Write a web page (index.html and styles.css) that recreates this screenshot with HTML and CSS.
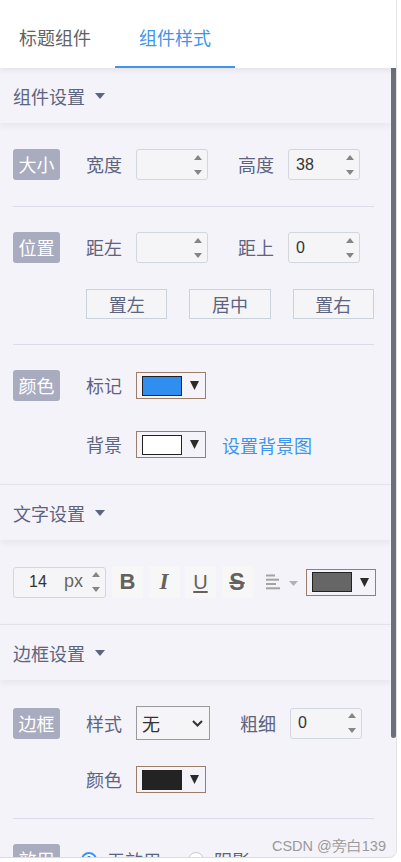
FILE: index.html
```html
<!DOCTYPE html>
<html lang="zh">
<head>
<meta charset="utf-8">
<title>组件样式</title>
<link rel="stylesheet" href="styles.css">
</head>
<body>
<div class="panel">
  <div class="tabs">
    <div class="tab tab-first">标题组件</div>
    <div class="tab tab-active">组件样式</div>
  </div>
  <div class="main">
    <div class="content">
      <div class="sec-head sec-head-first">组件设置<span class="caret"></span></div>
      <div class="sec-body">
        <div class="row">
          <span class="tag">大小</span>
          <span class="label">宽度</span>
          <div class="num"><span class="val"></span><span class="spin"><i class="up"></i><i class="down"></i></span></div>
          <span class="label label-gap">高度</span>
          <div class="num"><span class="val">38</span><span class="spin"><i class="up"></i><i class="down"></i></span></div>
        </div>
        <div class="divider"></div>
        <div class="row">
          <span class="tag">位置</span>
          <span class="label">距左</span>
          <div class="num"><span class="val"></span><span class="spin"><i class="up"></i><i class="down"></i></span></div>
          <span class="label label-gap">距上</span>
          <div class="num"><span class="val">0</span><span class="spin"><i class="up"></i><i class="down"></i></span></div>
        </div>
        <div class="row row-indent row-btns">
          <div class="btn">置左</div>
          <div class="btn">居中</div>
          <div class="btn">置右</div>
        </div>
        <div class="divider divider-tight"></div>
        <div class="row">
          <span class="tag">颜色</span>
          <span class="label">标记</span>
          <div class="picker"><span class="swatch swatch-blue"></span><svg class="arrow" width="9" height="9" viewBox="0 0 9 9"><polygon points="0,0 9,0 4.5,9" fill="#2b2b2b"/></svg></div>
        </div>
        <div class="row row-indent row-second">
          <span class="label">背景</span>
          <div class="picker"><span class="swatch swatch-white"></span><svg class="arrow" width="9" height="9" viewBox="0 0 9 9"><polygon points="0,0 9,0 4.5,9" fill="#2b2b2b"/></svg></div>
          <span class="link">设置背景图</span>
        </div>
      </div>

      <div class="sec-head">文字设置<span class="caret"></span></div>
      <div class="sec-body">
        <div class="row">
          <div class="num num-size"><span class="val val-size">14</span><span class="unit">px</span><span class="spin"><i class="up"></i><i class="down"></i></span></div>
          <div class="fmt fmt-b">B</div>
          <div class="fmt fmt-i">I</div>
          <div class="fmt fmt-u">U</div>
          <div class="fmt fmt-s">S</div>
          <div class="align">
            <svg width="15" height="16" viewBox="0 0 15 16"><g fill="#a3a3a3"><rect x="0" y="0.5" width="9" height="2"/><rect x="0" y="4.7" width="13" height="2"/><rect x="0" y="9" width="10" height="2"/><rect x="0" y="13.3" width="14" height="2"/></g></svg>
            <svg class="align-caret" width="9" height="5" viewBox="0 0 9 5"><polygon points="0,0 9,0 4.5,5" fill="#b2b2b2"/></svg>
          </div>
          <div class="picker"><span class="swatch swatch-gray"></span><svg class="arrow" width="9" height="9" viewBox="0 0 9 9"><polygon points="0,0 9,0 4.5,9" fill="#2b2b2b"/></svg></div>
        </div>
      </div>

      <div class="sec-head">边框设置<span class="caret"></span></div>
      <div class="sec-body">
        <div class="row">
          <span class="tag">边框</span>
          <span class="label">样式</span>
          <div class="select"><span class="select-val">无</span><svg width="11" height="7" viewBox="0 0 11 7"><polyline points="1,1 5.5,5.5 10,1" fill="none" stroke="#333" stroke-width="2"/></svg></div>
          <span class="label label-gap">粗细</span>
          <div class="num"><span class="val">0</span><span class="spin"><i class="up"></i><i class="down"></i></span></div>
        </div>
        <div class="row row-indent row-second-b">
          <span class="label">颜色</span>
          <div class="picker"><span class="swatch swatch-black"></span><svg class="arrow" width="9" height="9" viewBox="0 0 9 9"><polygon points="0,0 9,0 4.5,9" fill="#2b2b2b"/></svg></div>
        </div>
        <div class="divider divider-tight"></div>
        <div class="row">
          <span class="tag">效用</span>
          <span class="radio radio-on"></span><span class="radio-text">无效用</span>
          <span class="radio"></span><span class="radio-text">阴影</span>
        </div>
      </div>
    </div>
    <div class="scrollbar"><div class="thumb"></div></div>
  </div>
  <div class="watermark">CSDN @旁白139</div>
</div>
</body>
</html>
```

FILE: styles.css
```css
html, body {
  margin: 0;
  padding: 0;
  background: #ffffff;
}
body {
  font-family: "Noto Sans CJK SC", "Liberation Sans", sans-serif;
}
.panel {
  width: 396px;
  height: 857px;
  border-right: 1px solid #e3e3e7;
  border-bottom: 1px solid #dcdce0;
  border-bottom-right-radius: 8px;
  overflow: hidden;
  display: flex;
  flex-direction: column;
  position: relative;
  background: #f4f3f9;
}
.tabs {
  height: 68px;
  flex: none;
  display: flex;
  background: #ffffff;
  box-shadow: 0 2px 6px rgba(0, 0, 0, 0.08);
  position: relative;
  z-index: 2;
}
.tab {
  height: 68px;
  box-sizing: border-box;
  padding-top: 24px;
  line-height: 26px;
  font-size: 18px;
  color: #636363;
}
.tab-first {
  width: 115px;
  padding-left: 19px;
}
.tab-active {
  width: 120px;
  text-align: center;
  color: #3f95ea;
  border-bottom: 2px solid #4193e8;
}
.main {
  flex: 1;
  display: flex;
  min-height: 0;
}
.content {
  flex: 1;
  min-width: 0;
  overflow: hidden;
}
.scrollbar {
  width: 5px;
  flex: none;
}
.thumb {
  height: 670px;
  background: #6b7079;
  border-radius: 0 0 3px 3px;
}
.sec-head {
  height: 56px;
  box-sizing: border-box;
  padding-left: 13px;
  display: flex;
  align-items: center;
  font-size: 18px;
  color: #5d6480;
  border-top: 1px solid #e4e3eb;
  box-shadow: 0 3px 7px rgba(0, 0, 0, 0.06);
  position: relative;
  z-index: 1;
}
.sec-head-first {
  height: 55px;
  border-top: none;
}
.caret {
  margin-left: 10px;
  width: 0;
  height: 0;
  border-left: 5px solid transparent;
  border-right: 5px solid transparent;
  border-top: 6px solid #5d6480;
}
.sec-body {
  padding: 26px 17px 26px 13px;
}
.row {
  display: flex;
  align-items: center;
}
.row-indent {
  padding-left: 73px;
}
.row-btns {
  margin-top: 26px;
  gap: 22px;
}
.row-second {
  margin-top: 30px;
}
.row-second-b {
  margin-top: 26px;
}
.divider {
  height: 1px;
  background: #dcdbea;
  margin: 26px 0 25px;
}
.divider-tight {
  margin-top: 25px;
}
.tag {
  width: 47px;
  height: 31px;
  line-height: 31px;
  text-align: center;
  background: #a9abbf;
  color: #ffffff;
  font-size: 18px;
  border-radius: 3px;
  flex: none;
}
.label {
  margin-left: 26px;
  margin-right: 14px;
  font-size: 18px;
  line-height: 27px;
  color: #5d6480;
  flex: none;
}
.row-indent .label {
  margin-left: 0;
}
.label-gap {
  margin-left: 30px;
}
.num {
  width: 72px;
  height: 31px;
  box-sizing: border-box;
  border: 1px solid #d2d7df;
  border-radius: 3px;
  background: #f5f5f7;
  display: flex;
  align-items: center;
  padding: 0 5px 0 7px;
  flex: none;
}
.val {
  flex: 1;
  font-family: "Liberation Sans", sans-serif;
  font-size: 16px;
  color: #333333;
}
.spin {
  height: 20px;
  display: flex;
  flex-direction: column;
  justify-content: space-between;
}
.spin i {
  display: block;
  width: 0;
  height: 0;
  border-left: 4.5px solid transparent;
  border-right: 4.5px solid transparent;
}
.spin .up {
  border-bottom: 5px solid #858585;
}
.spin .down {
  border-top: 5px solid #858585;
}
.btn {
  flex: 1;
  height: 30px;
  box-sizing: border-box;
  border: 1px solid #c9d1da;
  background: #f5f5f8;
  text-align: center;
  line-height: 28px;
  font-size: 18px;
  color: #5d6480;
}
.picker {
  width: 70px;
  height: 27px;
  box-sizing: border-box;
  border: 1px solid #9c7d67;
  display: flex;
  align-items: center;
  padding-left: 5px;
  flex: none;
}
.swatch {
  width: 40px;
  height: 20px;
  box-sizing: border-box;
  border: 1px solid #222222;
}
.swatch-blue { background: #2f8ef0; }
.swatch-white { background: #ffffff; }
.swatch-gray { background: #666666; }
.swatch-black { background: #232323; }
.arrow {
  margin-left: 8px;
}
.link {
  margin-left: 16px;
  font-size: 18px;
  color: #3f95ea;
}
.num-size {
  width: 93px;
  height: 31px;
  padding-left: 15px;
}
.val-size {
  flex: none;
  width: 35px;
}
.unit {
  flex: 1;
  font-family: "Liberation Sans", sans-serif;
  font-size: 18px;
  color: #666666;
  margin-top: -2px;
}
.fmt {
  width: 31px;
  height: 32px;
  margin-left: 5.5px;
  background: #f7f7f7;
  display: flex;
  align-items: center;
  justify-content: center;
  color: #66615d;
  flex: none;
}
.fmt-b {
  margin-left: 6px;
  font: bold 22px "Liberation Sans", sans-serif;
}
.fmt-i {
  font: italic bold 23px "Liberation Serif", serif;
}
.fmt-u {
  font: 20px "Liberation Sans", sans-serif;
  text-decoration: underline;
  text-decoration-thickness: 2px;
  text-underline-offset: 2px;
}
.fmt-s {
  font: bold 23px "Liberation Sans", sans-serif;
  text-decoration: line-through;
  text-decoration-thickness: 2px;
}
.align {
  display: flex;
  align-items: center;
  margin-left: 13px;
  margin-right: 8px;
  height: 32px;
}
.align-caret {
  margin-left: 8px;
  margin-top: 2px;
}
.select {
  width: 74px;
  height: 34px;
  box-sizing: border-box;
  border: 1px solid #9a9a9a;
  background: #f5f5f7;
  display: flex;
  align-items: center;
  padding: 0 6px 0 5px;
  flex: none;
}
.select-val {
  flex: 1;
  font-size: 18px;
  color: #333333;
}
.radio {
  width: 16px;
  height: 16px;
  box-sizing: border-box;
  border-radius: 50%;
  border: 1px solid #c8ccd4;
  background: #ffffff;
  margin-left: 27px;
  flex: none;
}
.tag + .radio {
  margin-left: 21px;
}
.radio-on {
  border: 2px solid #3f95ea;
  background: radial-gradient(circle, #2f7fd6 0 3.5px, #ffffff 4px);
}
.radio-text {
  margin-left: 10px;
  font-size: 18px;
  color: #5d6480;
}
.watermark {
  position: absolute;
  right: 10px;
  bottom: 2px;
  font-family: "Liberation Sans", sans-serif;
  font-size: 14.5px;
  color: #9a9a9a;
  line-height: 18px;
}
```
